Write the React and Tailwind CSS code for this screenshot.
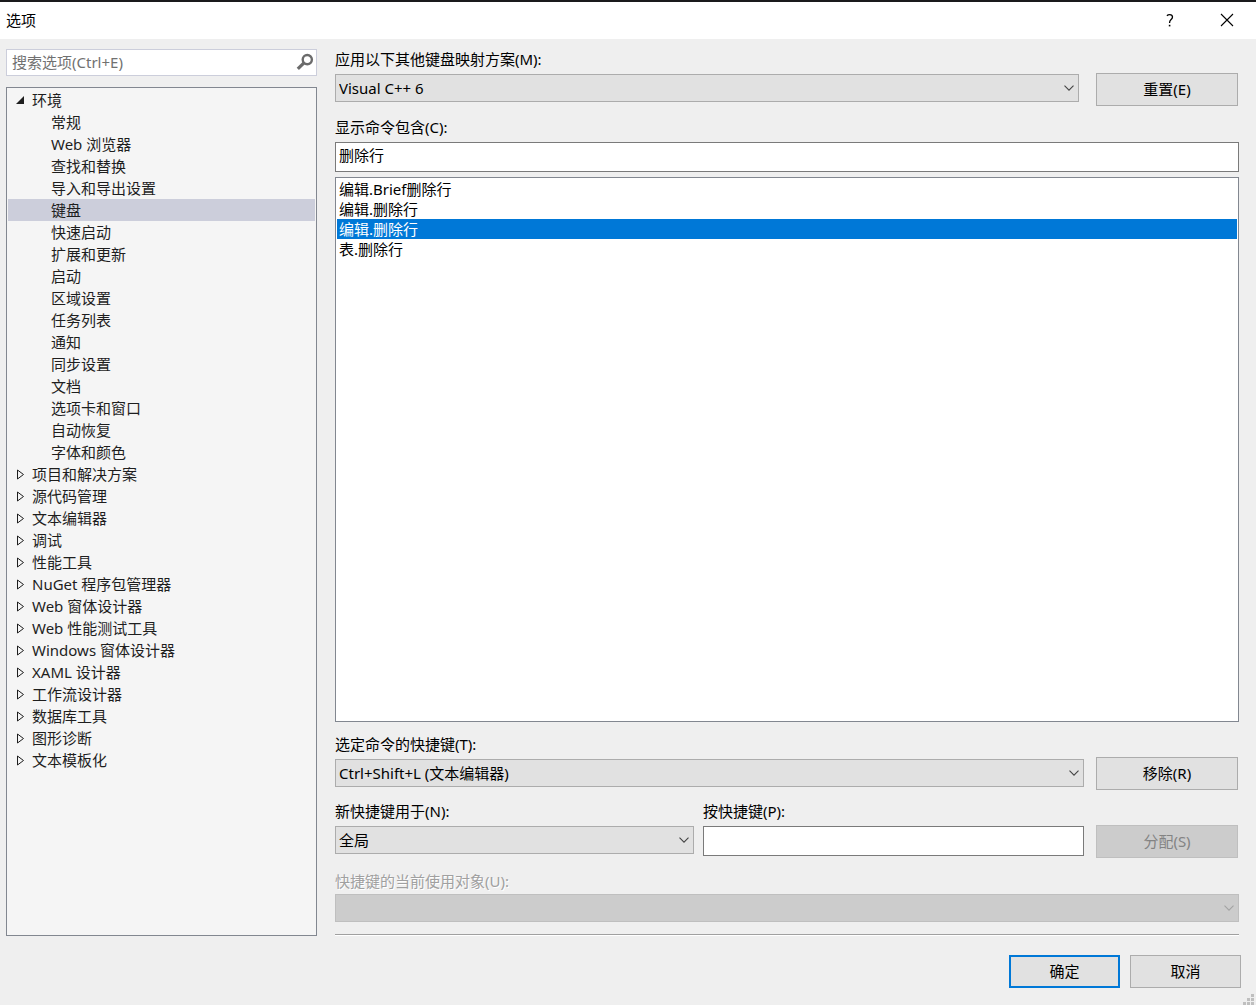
import React, { useState } from "react";

const environmentPages = [
  "常规",
  "Web 浏览器",
  "查找和替换",
  "导入和导出设置",
  "键盘",
  "快速启动",
  "扩展和更新",
  "启动",
  "区域设置",
  "任务列表",
  "通知",
  "同步设置",
  "文档",
  "选项卡和窗口",
  "自动恢复",
  "字体和颜色",
];

const categories = [
  "项目和解决方案",
  "源代码管理",
  "文本编辑器",
  "调试",
  "性能工具",
  "NuGet 程序包管理器",
  "Web 窗体设计器",
  "Web 性能测试工具",
  "Windows 窗体设计器",
  "XAML 设计器",
  "工作流设计器",
  "数据库工具",
  "图形诊断",
  "文本模板化",
];

const commands = ["编辑.Brief删除行", "编辑.删除行", "编辑.删除行", "表.删除行"];

function Combo({ id, value, disabled }) {
  return (
    <div className="relative">
      <select
        id={id}
        disabled={disabled}
        className="block h-7 w-full appearance-none border border-[#acacac] bg-[#e1e1e1] pr-6 pl-[3px] leading-5 text-black disabled:border-[#bfbfbf] disabled:bg-[#cccccc] disabled:opacity-100"
      >
        {value ? <option>{value}</option> : null}
      </select>
      <svg
        viewBox="0 0 10 6"
        className={
          disabled
            ? "pointer-events-none absolute top-[11px] right-[5px] h-1.5 w-2.5 text-[#a3a3a3]"
            : "pointer-events-none absolute top-[11px] right-[5px] h-1.5 w-2.5 text-[#444444]"
        }
        fill="none"
        stroke="currentColor"
        strokeWidth="1.1"
      >
        <path d="M0.5 0.6 L5 5.1 L9.5 0.6" />
      </svg>
    </div>
  );
}

function Button({ children, className = "", disabled }) {
  return (
    <button
      type="button"
      disabled={disabled}
      className={
        "h-[33px] shrink-0 border pb-0.5 leading-5 disabled:border-[#bfbfbf] disabled:bg-[#cccccc] disabled:text-[#838383] " +
        className
      }
    >
      {children}
    </button>
  );
}

function TreeArrow({ open }) {
  return (
    <svg viewBox="0 0 9 11" className="h-[11px] w-[9px] shrink-0" aria-hidden="true">
      {open ? (
        <path d="M8 1 V9 H0 Z" fill="#1e1e1e" />
      ) : (
        <path d="M1.5 1 V10 L7.5 5.5 Z" fill="none" stroke="#1e1e1e" strokeWidth="1" />
      )}
    </svg>
  );
}

function Category({ label, open, children }) {
  return (
    <li role="treeitem" aria-expanded={open}>
      <button type="button" className="flex h-[22px] w-full items-center gap-[7px] pl-2 text-left">
        <TreeArrow open={open} />
        {label}
      </button>
      {children}
    </li>
  );
}

export default function App() {
  const [page, setPage] = useState(4);
  const [command, setCommand] = useState(2);
  const [filter, setFilter] = useState("删除行");

  return (
    <div className="relative flex min-h-screen flex-col bg-[#efefef] font-['Noto_Sans','Noto_Sans_CJK_SC',sans-serif] text-[15px] leading-5 text-black">
      <header className="flex h-[39px] items-center justify-between border-t-2 border-[#1a1a1c] bg-white pr-[21px] pb-px pl-1.5">
        <h1>选项</h1>
        <div className="flex items-center gap-[41px]">
          <button type="button" aria-label="帮助" className="flex h-6 w-4 items-center justify-center">
            <svg viewBox="0 0 8 13" className="h-[13px] w-2" fill="none" stroke="#000" strokeWidth="1.3">
              <path d="M0.9 1.7 C1.6 1 2.6 0.7 3.7 0.7 C5.5 0.7 6.5 1.6 6.5 3 C6.5 4.3 5.8 5 4.9 5.8 C4 6.6 3.6 7.2 3.6 8.4 V9" />
              <path d="M3.6 10.8 V12.4" strokeWidth="1.6" />
            </svg>
          </button>
          <button type="button" aria-label="关闭" className="flex h-6 w-4 items-center justify-center">
            <svg viewBox="0 0 14 14" className="size-3.5" fill="none" stroke="#000" strokeWidth="1.1">
              <path d="M1 1 L13 13 M13 1 L1 13" />
            </svg>
          </button>
        </div>
      </header>

      <main className="grid flex-1 grid-cols-[311px_minmax(0,1fr)] gap-[18px] pr-[17px] pl-1.5">
        <section className="flex flex-col gap-[11px] pt-2.5">
          <div className="flex h-[27px] items-center border border-[#cccedb] bg-white pr-0.5 pb-0.5 pl-[5px]">
            <input
              type="search"
              aria-label="搜索选项"
              placeholder="搜索选项(Ctrl+E)"
              className="min-w-0 flex-1 leading-5 outline-none placeholder:text-[#717171]"
            />
            <svg viewBox="0 0 18 18" className="size-[18px]" fill="none" stroke="#6b6b6b">
              <circle cx="11.3" cy="6.6" r="4.6" strokeWidth="2.4" />
              <path d="M8 9.8 L1.8 15.9" strokeWidth="3.2" />
            </svg>
          </div>
          <ul role="tree" className="flex-1 border border-[#828790] bg-[#f5f5f5] p-px text-[#1e1e1e]">
            <Category label="环境" open>
              <ul role="group">
                {environmentPages.map((name, i) => (
                  <li key={name} role="treeitem" aria-selected={page === i}>
                    <button
                      type="button"
                      onClick={() => setPage(i)}
                      className={
                        page === i
                          ? "block h-[22px] w-full bg-[#cccedb] pl-[43px] text-left"
                          : "block h-[22px] w-full pl-[43px] text-left"
                      }
                    >
                      {name}
                    </button>
                  </li>
                ))}
              </ul>
            </Category>
            {categories.map((name) => (
              <Category key={name} label={name} open={false} />
            ))}
          </ul>
        </section>

        <section className="flex flex-col pt-2.5">
          <div className="flex items-end gap-[17px] pr-px">
            <div className="flex flex-1 flex-col gap-[5px] pb-1">
              <label htmlFor="scheme">应用以下其他键盘映射方案(M):</label>
              <Combo id="scheme" value="Visual C++ 6" />
            </div>
            <Button className="w-[142px] border-[#acacac] bg-[#e1e1e1]">重置(E)</Button>
          </div>

          <label htmlFor="filter" className="mt-[11px]">
            显示命令包含(C):
          </label>
          <input
            id="filter"
            type="text"
            value={filter}
            onChange={(e) => setFilter(e.target.value)}
            className="mt-[5px] h-[30px] border border-[#7a7a7a] bg-white pb-1.5 pl-[3px] leading-5 outline-none"
          />
          <ul
            role="listbox"
            aria-label="命令"
            className="mt-[5px] flex-1 border border-[#828790] bg-white p-px"
          >
            {commands.map((name, i) => (
              <li
                key={i}
                role="option"
                aria-selected={command === i}
                onClick={() => setCommand(i)}
                className={command === i ? "h-5 bg-[#0078d7] pl-0.5 text-white" : "h-5 pl-0.5"}
              >
                {name}
              </li>
            ))}
          </ul>

          <div className="mt-3 flex items-end gap-3 pr-px">
            <div className="flex flex-1 flex-col gap-[5px] pb-[3px]">
              <label htmlFor="shortcut">选定命令的快捷键(T):</label>
              <Combo id="shortcut" value="Ctrl+Shift+L (文本编辑器)" />
            </div>
            <Button className="w-[142px] border-[#acacac] bg-[#e1e1e1]">移除(R)</Button>
          </div>

          <div className="mt-[11px] flex items-end gap-3 pr-px">
            <div className="grid flex-1 grid-cols-[359fr_381fr] gap-[9px] pb-0.5">
              <div className="flex flex-col gap-[5px]">
                <label htmlFor="scope">新快捷键用于(N):</label>
                <Combo id="scope" value="全局" />
              </div>
              <div className="flex flex-col gap-[5px]">
                <label htmlFor="press">按快捷键(P):</label>
                <input
                  id="press"
                  type="text"
                  className="h-[30px] w-full border border-[#7a7a7a] bg-white pl-[3px] leading-5 outline-none"
                />
              </div>
            </div>
            <Button disabled className="w-[142px]">
              分配(S)
            </Button>
          </div>

          <div className="mt-[13px] flex flex-col gap-[3px]">
            <label htmlFor="usage" className="text-[#a0a0a0] [text-shadow:1px_1px_0_#fff]">
              快捷键的当前使用对象(U):
            </label>
            <Combo id="usage" disabled />
          </div>
          <hr className="mt-3 h-0.5 border-t border-b border-t-[#a0a0a0] border-b-white" />
        </section>
      </main>

      <footer className="flex justify-end gap-2.5 pt-[19px] pr-[15px] pb-[17px]">
        <Button className="w-[111px] border-2 border-[#0078d7] bg-[#e1e1e1]">确定</Button>
        <Button className="w-[111px] border-[#acacac] bg-[#e1e1e1]">取消</Button>
      </footer>

      <svg viewBox="0 0 11 11" className="absolute right-0.5 bottom-0 size-[11px]" fill="#bfbfbf" aria-hidden="true">
        <path d="M8 0h3v3h-3z M4 4h3v3h-3z M8 4h3v3h-3z M0 8h3v3h-3z M4 8h3v3h-3z M8 8h3v3h-3z" />
      </svg>
    </div>
  );
}
